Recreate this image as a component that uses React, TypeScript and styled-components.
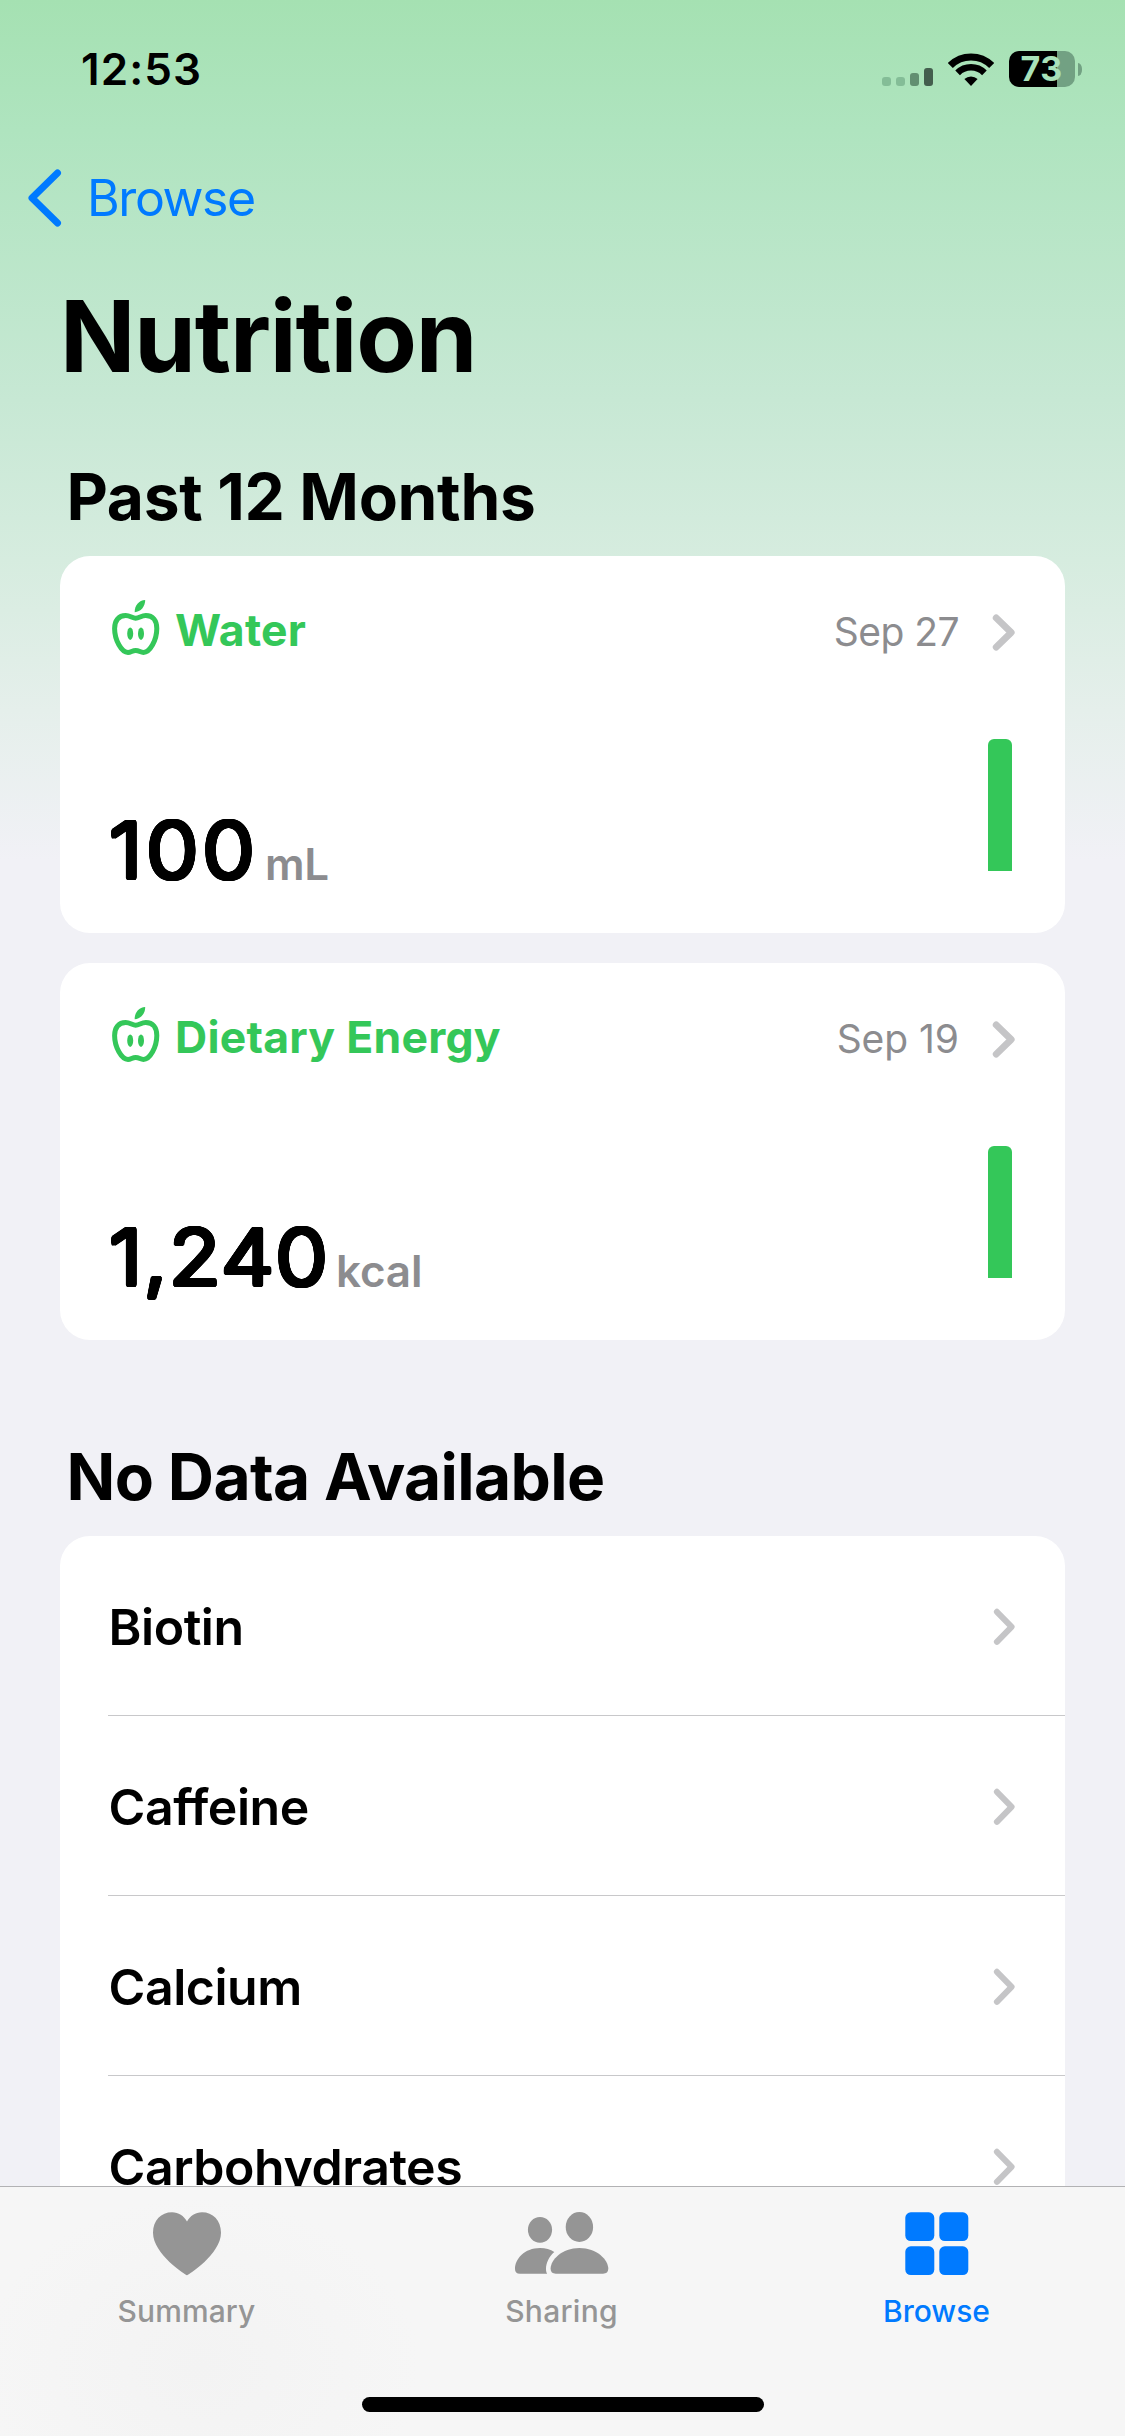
import React from 'react';
import styled, { createGlobalStyle } from 'styled-components';

const GREEN = '#34c759';
const BLUE = '#007aff';
const GREY = '#959595';

const GlobalStyle = createGlobalStyle`
  * { box-sizing: border-box; }
  body {
    margin: 0;
    font-family: Inter, "Liberation Sans", sans-serif;
    -webkit-font-smoothing: antialiased;
  }
`;

// A light weight thickened by a ring of shadows gives softly rounded numerals.
const roundedOutline = Array.from({ length: 24 }, (_, i) => {
  const angle = (i / 24) * Math.PI * 2;
  return `${(Math.cos(angle) * 2.2).toFixed(2)}px ${(Math.sin(angle) * 2.3).toFixed(2)}px 0 #000`;
}).join(', ');

const Screen = styled.div`
  width: 1125px;
  height: 2436px;
  display: flex;
  flex-direction: column;
  overflow: hidden;
  background: linear-gradient(
      180deg,
      #a5e1b2 0,
      #afe4bf 130px,
      #c7e8d4 400px,
      #d6ecdf 560px,
      #e5efeb 710px,
      #f1f1f6 860px
    );
`;

const StatusBar = styled.header`
  height: 138px;
  flex: none;
  display: flex;
  align-items: center;
  justify-content: space-between;
  padding: 0 43px 0 81px;
`;

const Clock = styled.time`
  font-size: 44px;
  font-weight: 600;
  line-height: 50px;
  letter-spacing: 1.1px;
`;

const StatusIcons = styled.div`
  display: flex;
  align-items: center;
`;

const Signal = styled.div`
  display: flex;
  align-items: flex-end;
  gap: 5px;
  height: 33px;
  margin-right: 15px;
`;

const SignalBar = styled.span<{ $height: number; $color: string }>`
  width: 9px;
  height: ${(p) => p.$height}px;
  border-radius: 3px;
  background: ${(p) => p.$color};
`;

const Battery = styled.div`
  display: flex;
  align-items: center;
  gap: 3px;
  margin-left: 15px;
`;

const BatteryBody = styled.div`
  width: 66px;
  height: 36px;
  border-radius: 10px;
  display: flex;
  align-items: center;
  justify-content: center;
  background: linear-gradient(90deg, #000 48px, #72a183 48px);
  color: #a9e2ba;
  font-size: 34px;
  font-weight: 650;
  line-height: 36px;
  letter-spacing: 0.5px;
  padding-right: 1px;
`;

const BatteryCap = styled.span`
  width: 4px;
  height: 13px;
  border-radius: 0 4px 4px 0 / 0 6px 6px 0;
  background: #72a183;
`;

const NavBar = styled.nav`
  height: 120px;
  flex: none;
  display: flex;
  align-items: center;
  gap: 25px;
  padding-left: 28px;
  color: ${BLUE};
  font-size: 50px;
  line-height: 60px;
  letter-spacing: -1.4px;
`;

const Content = styled.main`
  flex: 1;
  min-height: 0;
  overflow: hidden;
  padding: 18px 60px 0;
`;

const Title = styled.h1`
  margin: 0 0 61px;
  font-size: 99px;
  font-weight: 700;
  line-height: 120px;
  letter-spacing: -1.15px;
`;

const SectionTitle = styled.h2<{ $tracking: number }>`
  margin: 0;
  padding: 0 0 19px 6.5px;
  font-size: 64px;
  font-weight: 700;
  line-height: 80px;
  letter-spacing: ${(p) => p.$tracking}px;
`;

const CardList = styled.div`
  display: flex;
  flex-direction: column;
  gap: 30px;
  margin-bottom: 97px;
`;

const Card = styled.section`
  height: 377px;
  border-radius: 30px;
  background: #fff;
  padding: 34px 50px 41px 52px;
  display: flex;
  flex-direction: column;
  justify-content: space-between;
`;

const CardHeader = styled.div`
  display: flex;
  align-items: center;
  height: 80px;
  color: ${GREEN};
`;

const CardName = styled.h3`
  margin: 0 auto 0 15px;
  font-size: 44.5px;
  font-weight: 650;
  line-height: 80px;
  letter-spacing: 0.25px;
`;

const CardDate = styled.span<{ $tracking: number }>`
  margin-right: 33px;
  padding-top: 4px;
  color: #8c8c8f;
  font-size: 39px;
  line-height: 76px;
  letter-spacing: ${(p) => p.$tracking}px;
`;

const CardFooter = styled.div`
  display: flex;
  align-items: flex-end;
  justify-content: space-between;
`;

const Reading = styled.div<{ $gap: number }>`
  display: flex;
  align-items: flex-end;
  gap: ${(p) => p.$gap}px;
  margin-left: -3px;
`;

const Amount = styled.span<{ $tracking: number }>`
  font-size: 77px;
  font-weight: 300;
  line-height: 84px;
  letter-spacing: ${(p) => p.$tracking}px;
  text-shadow: ${roundedOutline};
  transform: scaleX(1.1);
  transform-origin: left center;
`;

const Unit = styled.span`
  color: #8c8c8f;
  font-size: 44px;
  font-weight: 600;
  line-height: 56px;
  letter-spacing: -0.2px;
`;

const ChartBar = styled.div`
  width: 24px;
  height: 132px;
  margin: 0 3px 21px 0;
  border-radius: 6px 6px 0 0;
  background: ${GREEN};
`;

const List = styled.ul`
  list-style: none;
  margin: 0;
  padding: 0 0 0 48px;
  border-radius: 30px 30px 0 0;
  background: #fff;
`;

const ListRow = styled.li`
  display: flex;
  align-items: center;
  justify-content: space-between;
  height: 180px;
  padding: 2px 50px 0 0.5px;
  border-bottom: 1px solid #c8c8ca;
  font-size: 50px;
  font-weight: 600;
  line-height: 60px;
  letter-spacing: -0.45px;
`;

const TabBar = styled.footer`
  flex: none;
  height: 250px;
  border-top: 1px solid #b2b2b4;
  background: radial-gradient(ellipse 220px 170px at 200px 180px, #f3f3f3, #f6f6f6 100%);
  display: flex;
  flex-direction: column;
`;

const Tabs = styled.div`
  display: flex;
  height: 210px;
  margin: 0 1px 0 -1px;
  padding-top: 25px;
`;

const Tab = styled.div<{ $color: string; $tracking: number }>`
  flex: 1;
  display: flex;
  flex-direction: column;
  align-items: center;
  gap: 15px;
  color: ${(p) => p.$color};
  font-size: 30px;
  font-weight: 500;
  line-height: 40px;
  letter-spacing: ${(p) => p.$tracking}px;
`;

const HomeIndicator = styled.div`
  width: 402px;
  height: 15px;
  margin: 0 auto;
  border-radius: 8px;
  background: #000;
`;

const WifiIcon = () => (
  <svg width="46" height="33" viewBox="0 0 46 33">
    <g fill="none" stroke="#000">
      <path d="M2.3 12.5A29.4 29.4 0 0 1 43.7 12.5" strokeWidth="7.2" />
      <path d="M9.6 19.8A19 19 0 0 1 36.4 19.8" strokeWidth="6.6" />
    </g>
    <path d="M16.4 26.1A9.8 9.8 0 0 1 29.6 26.1L23 33Z" />
  </svg>
);

const BackIcon = () => (
  <svg width="34" height="58" viewBox="0 0 34 58" fill="none" stroke="currentColor" strokeWidth="7" strokeLinecap="round" strokeLinejoin="round">
    <path d="M29.5 4L4 29L29.5 54" />
  </svg>
);

const CardChevronSlot = styled.span`
  display: flex;
  padding-top: 4px;
`;

const Chevron = ({ thin = false }: { thin?: boolean }) => (
  <svg width="23" height="37" viewBox="0 0 23 37" fill="none" stroke="#c5c5c7" strokeWidth={thin ? 6 : 6.8} strokeLinecap="round" strokeLinejoin="round">
    <path d={thin ? 'M4.9 3.8L19.6 18.8L4.9 33.8' : 'M4.2 3.9L19.2 18.5L4.2 33.1'} />
  </svg>
);

const AppleIcon = () => (
  <svg width="48" height="60" viewBox="0 0 48 60">
    <path
      d="M23.7 18.2C20.5 18.2 18 15.6 13.7 15.6C6.5 15.6 2.6 20.5 2.6 28.5C2.6 40 9.5 52.4 16 52.4C19 52.4 20.3 50.4 23.7 50.4C27.1 50.4 28.5 52.4 31.4 52.4C38 52.4 44.8 40 44.8 28.5C44.8 20.5 41 15.6 33.8 15.6C29.4 15.6 27 18.2 23.7 18.2Z"
      fill="none"
      stroke="currentColor"
      strokeWidth="5"
    />
    <path d="M22.7 12.2C22.4 5.5 27 0.3 33.2 0C33.3 6.5 28.7 11.8 22.7 12.2Z" fill="currentColor" />
    <ellipse cx="18.2" cy="33.7" rx="3" ry="6.2" fill="currentColor" />
    <ellipse cx="29" cy="33.7" rx="3" ry="6.2" fill="currentColor" />
  </svg>
);

const HeartIcon = () => (
  <svg width="68" height="64" viewBox="0 0 68 64" fill="currentColor">
    <path d="M34 63.2C32.6 63.2 0 42 0 20.8C0 8.3 8.2 0.2 19 0.2C25.6 0.2 30.8 3.8 34 9.5C37.2 3.8 42.4 0.2 49 0.2C59.8 0.2 68 8.3 68 20.8C68 42 35.4 63.2 34 63.2Z" />
  </svg>
);

const PeopleIcon = () => (
  <svg width="94" height="64" viewBox="0 0 94 64" fill="currentColor">
    <ellipse cx="25" cy="17.8" rx="12.1" ry="12.9" />
    <ellipse cx="64.4" cy="15" rx="13.7" ry="14.9" />
    <path d="M39.3 40C34 44.5 31 51 31 57C31 59 31.3 60.4 32.2 61.7H5C1.6 61.7 0 60 0 57C0 47 9.5 36 25 36C30.5 36 35.5 37.4 39.3 40Z" />
    <path d="M64.4 36C82 36 93.3 48 93.3 56.8C93.3 60 91.5 61.7 88 61.7H40.8C37.4 61.7 35.6 60 35.6 56.8C35.6 48 47 36 64.4 36Z" />
  </svg>
);

const GridIcon = () => (
  <svg width="64" height="64" viewBox="0 0 64 64" fill="currentColor">
    <rect x="0.3" y="0.3" width="29" height="28.8" rx="5.5" />
    <rect x="34.3" y="0.3" width="29" height="28.8" rx="5.5" />
    <rect x="0.3" y="34.3" width="29" height="28.8" rx="5.5" />
    <rect x="34.3" y="34.3" width="29" height="28.8" rx="5.5" />
  </svg>
);

const readings = [
  { name: 'Water', date: 'Sep 27', dateTracking: -0.55, amount: '100', unit: 'mL', tracking: 3.5, gap: 20 },
  { name: 'Dietary Energy', date: 'Sep 19', dateTracking: -0.05, amount: '1,240', unit: 'kcal', tracking: 1.2, gap: 27 },
];

const signal = [
  { height: 9, color: '#84bd97' },
  { height: 9, color: '#84bd97' },
  { height: 13, color: '#628f71' },
  { height: 18, color: '#445e4e' },
];

const nutrients = ['Biotin', 'Caffeine', 'Calcium', 'Carbohydrates'];

const tabs = [
  { label: 'Summary', Icon: HeartIcon, tracking: 0.1, color: GREY },
  { label: 'Sharing', Icon: PeopleIcon, tracking: 0.3, color: GREY },
  { label: 'Browse', Icon: GridIcon, tracking: 0, color: BLUE },
];

export default function App() {
  return (
    <Screen>
      <GlobalStyle />
      <StatusBar>
        <Clock>12:53</Clock>
        <StatusIcons>
          <Signal>
            {signal.map((bar, i) => (
              <SignalBar key={i} $height={bar.height} $color={bar.color} />
            ))}
          </Signal>
          <WifiIcon />
          <Battery>
            <BatteryBody>73</BatteryBody>
            <BatteryCap />
          </Battery>
        </StatusIcons>
      </StatusBar>
      <NavBar>
        <BackIcon />
        <span>Browse</span>
      </NavBar>
      <Content>
        <Title>Nutrition</Title>
        <SectionTitle $tracking={-0.31}>Past 12 Months</SectionTitle>
        <CardList>
          {readings.map((r) => (
            <Card key={r.name}>
              <CardHeader>
                <AppleIcon />
                <CardName>{r.name}</CardName>
                <CardDate $tracking={r.dateTracking}>{r.date}</CardDate>
                <CardChevronSlot>
                  <Chevron />
                </CardChevronSlot>
              </CardHeader>
              <CardFooter>
                <Reading $gap={r.gap}>
                  <Amount $tracking={r.tracking}>{r.amount}</Amount>
                  <Unit>{r.unit}</Unit>
                </Reading>
                <ChartBar />
              </CardFooter>
            </Card>
          ))}
        </CardList>
        <SectionTitle $tracking={-0.63}>No Data Available</SectionTitle>
        <List>
          {nutrients.map((name) => (
            <ListRow key={name}>
              <span>{name}</span>
              <Chevron thin />
            </ListRow>
          ))}
        </List>
      </Content>
      <TabBar>
        <Tabs>
          {tabs.map(({ label, Icon, tracking, color }) => (
            <Tab key={label} $color={color} $tracking={tracking}>
              <Icon />
              <span>{label}</span>
            </Tab>
          ))}
        </Tabs>
        <HomeIndicator />
      </TabBar>
    </Screen>
  );
}
